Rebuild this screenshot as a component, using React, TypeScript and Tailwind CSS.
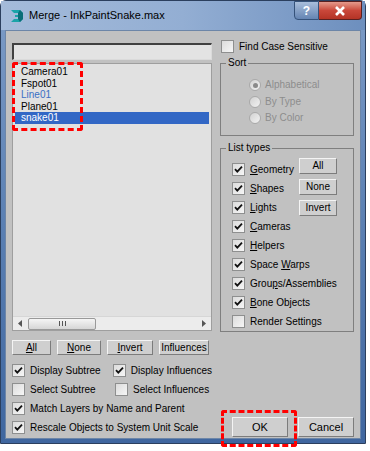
import React from "react";

const ui = "font-['Liberation_Sans',Arial,sans-serif] text-[10px] leading-none text-black";

function Check({ on }: { on?: boolean }) {
  return (
    <span className="flex h-[13px] w-[13px] shrink-0 items-center justify-center border border-[#8e8f8f] bg-gradient-to-br from-[#dcdcdc] to-[#f6f6f6]">
      {on && (
        <svg width="9" height="9" viewBox="0 0 9 9">
          <path d="M1 4.2 L3.3 6.6 L8 1.6" fill="none" stroke="#111" strokeWidth="1.8" />
        </svg>
      )}
    </span>
  );
}

function Radio({ on }: { on?: boolean }) {
  return (
    <span className="flex h-[12px] w-[12px] shrink-0 items-center justify-center rounded-full border border-[#a9a9a9] bg-gradient-to-br from-[#d2d2d2] to-[#f2f2f2]">
      {on && <span className="h-[5px] w-[5px] rounded-full bg-[#8a8a8a]" />}
    </span>
  );
}

function Btn({ children, className = "" }: { children: React.ReactNode; className?: string }) {
  return (
    <div
      className={`flex items-center justify-center whitespace-nowrap border border-t-[#f4f4f4] border-l-[#f4f4f4] border-r-[#7c7c7c] border-b-[#7c7c7c] bg-[#cfcfcf] ${className}`}
    >
      {children}
    </div>
  );
}

function CheckRow({ on, children, className = "" }: { on?: boolean; children: React.ReactNode; className?: string }) {
  return (
    <div className={`flex items-center gap-[5px] whitespace-nowrap ${className}`}>
      <Check on={on} />
      <span>{children}</span>
    </div>
  );
}

const items = [
  { name: "Camera01", color: "text-black" },
  { name: "Fspot01", color: "text-black" },
  { name: "Line01", color: "text-[#3a6fc4]" },
  { name: "Plane01", color: "text-black" },
];

const listTypes: [React.ReactNode, boolean][] = [
  [<><u>G</u>eometry</>, true],
  [<><u>S</u>hapes</>, true],
  [<><u>L</u>ights</>, true],
  [<><u>C</u>ameras</>, true],
  [<><u>H</u>elpers</>, true],
  [<>Space <u>W</u>arps</>, true],
  [<>Grou<u>p</u>s/Assemblies</>, true],
  [<><u>B</u>one Objects</>, true],
  [<>Render Settings</>, false],
];

export default function App() {
  return (
    <div className={`relative h-[451px] w-[370px] bg-white ${ui}`}>
      <div className="flex h-[444px] w-[366px] flex-col rounded-t-[6px] border border-[#2b3f5e] bg-gradient-to-b from-[#7d9cc7] via-[#5b80b3] to-[#3f669f]">
        {/* title bar */}
        <div className="relative flex h-[29px] shrink-0 items-center bg-gradient-to-r from-[#a4bbda] via-[#93aed3] to-[#6d8fbe] pl-[9px]">
          <svg width="14" height="14" viewBox="0 0 14 14" className="mr-[5px]">
            <path d="M1 1 H10 L13 4 V10 L10 13 H1 L4 10 H8 V8 H5 V6 H8 V4 H4 Z" fill="#1aa3a8" />
            <path d="M10 1 L13 4 V10 L10 13 L8 10 V4 Z" fill="#0b6e78" />
          </svg>
          <span className="text-[11px] text-black">Merge - InkPaintSnake.max</span>
          <div className="absolute right-[3px] top-0 flex">
            <div className="flex h-[19px] w-[25px] items-center justify-center rounded-bl-[4px] border border-[#35527a] bg-gradient-to-b from-[#a9bedb] to-[#6585b3] text-[12px] font-bold text-white">
              ?
            </div>
            <div className="flex h-[19px] w-[43px] items-center justify-center rounded-br-[4px] border border-l-0 border-[#5a2020] bg-gradient-to-b from-[#e49a8c] via-[#c9473a] to-[#b43325]">
              <svg width="12" height="10" viewBox="0 0 12 10">
                <path d="M2 1 L10 9 M10 1 L2 9" stroke="#fff" strokeWidth="2.6" />
              </svg>
            </div>
          </div>
        </div>
        {/* client */}
        <div className="mx-[4px] mb-[4px] flex flex-1 gap-[8px] border border-[#6d86a8] bg-[#c1c1c1] pl-[6px] pr-[6px]">
          {/* left column */}
          <div className="flex w-[200px] flex-col pt-[12px]">
            <div className="h-[17px] border-2 border-b border-r border-t-[#404040] border-l-[#404040] border-b-[#dadada] border-r-[#dadada] bg-[#e3e3e3]" />
            <div className="mt-[3px] flex h-[268px] flex-col border border-[#9e9e9e] bg-[#e1e1e1]">
              <div className="flex-1 pt-[2px]">
                {items.map((it) => (
                  <div key={it.name} className={`h-[11.6px] pl-[8px] leading-[11.6px] ${it.color}`}>
                    {it.name}
                  </div>
                ))}
                <div className="mx-[2px] h-[11.6px] bg-[#3267c5] pl-[6px] leading-[11.6px] text-white">snake01</div>
              </div>
              <div className="flex h-[14px] items-center border-t border-[#d6d6d6] bg-[#ececec] px-[5px]">
                <svg width="4" height="7" viewBox="0 0 4 7">
                  <path d="M4 0 V7 L0 3.5 Z" fill="#555" />
                </svg>
                <div className="ml-[6px] flex h-[12px] w-[68px] items-center justify-center rounded-[2px] border border-[#999] bg-gradient-to-b from-[#f5f5f5] to-[#d6d6d6]">
                  <svg width="7" height="5" viewBox="0 0 7 5">
                    <path d="M0.5 0 V5 M3.5 0 V5 M6.5 0 V5" stroke="#555" />
                  </svg>
                </div>
                <div className="flex-1" />
                <svg width="4" height="7" viewBox="0 0 4 7">
                  <path d="M0 0 V7 L4 3.5 Z" fill="#555" />
                </svg>
              </div>
            </div>
            <div className="mt-[9px] flex gap-[6px]">
              <Btn className="h-[15px] w-[39px]"><u>A</u>ll</Btn>
              <Btn className="h-[15px] w-[44px]"><u>N</u>one</Btn>
              <Btn className="h-[15px] w-[46px]"><u>I</u>nvert</Btn>
              <Btn className="h-[15px] w-[50px]">Influences</Btn>
            </div>
            <div className="mt-[9px] flex">
              <CheckRow on className="w-[103px]">Display Subtree</CheckRow>
              <CheckRow on>Display Influences</CheckRow>
            </div>
            <div className="mt-[6px] flex">
              <CheckRow className="w-[103px]">Select Subtree</CheckRow>
              <CheckRow>Select Influences</CheckRow>
            </div>
            <CheckRow on className="mt-[6px]">Match Layers by Name and Parent</CheckRow>
            <CheckRow on className="mt-[6px]">Rescale Objects to System Unit Scale</CheckRow>
          </div>
          {/* right column */}
          <div className="flex flex-1 flex-col pt-[9px]">
            <CheckRow className="ml-[1px]">Find Case Sensitive</CheckRow>
            <div className="relative mt-[10px] h-[73px] border border-[#7f7f7f]">
              <span className="absolute -top-[6px] left-[5px] bg-[#c1c1c1] px-[2px]">Sort</span>
              <div className="flex flex-col gap-[4.5px] pl-[28px] pt-[15px] text-[#8d8d8d]">
                <div className="flex items-center gap-[4px]"><Radio on />Alphabetical</div>
                <div className="flex items-center gap-[4px]"><Radio />By Type</div>
                <div className="flex items-center gap-[4px]"><Radio />By Color</div>
              </div>
            </div>
            <div className="relative mt-[12px] flex h-[184px] border border-[#7f7f7f] pl-[11px] pt-[14px]">
              <span className="absolute -top-[6px] left-[5px] bg-[#c1c1c1] px-[2px]">List types</span>
              <div className="flex w-[67px] flex-col gap-[6px]">
                {listTypes.map(([label, on], i) => (
                  <CheckRow key={i} on={on}>{label}</CheckRow>
                ))}
              </div>
              <div className="flex flex-col gap-[5px]">
                <Btn className="-mt-[5px] h-[16px] w-[38px]">All</Btn>
                <Btn className="h-[16px] w-[38px]">None</Btn>
                <Btn className="h-[16px] w-[38px]">Invert</Btn>
              </div>
            </div>
            <div className="mt-auto mb-[1px] flex gap-[10px] pl-[12px]">
              <Btn className="h-[20px] w-[56px] text-[11px]">OK</Btn>
              <Btn className="h-[20px] w-[56px] text-[11px]">Cancel</Btn>
            </div>
          </div>
        </div>
      </div>
      {/* annotation overlays */}
      <div className="absolute left-[12px] top-[62px] h-[69px] w-[71px] rounded-[3px] border-[3px] border-dashed border-[#ff0000]" />
      <div className="absolute left-[221px] top-[410px] h-[37px] w-[76px] rounded-[3px] border-[3px] border-dashed border-[#ff0000]" />
    </div>
  );
}
